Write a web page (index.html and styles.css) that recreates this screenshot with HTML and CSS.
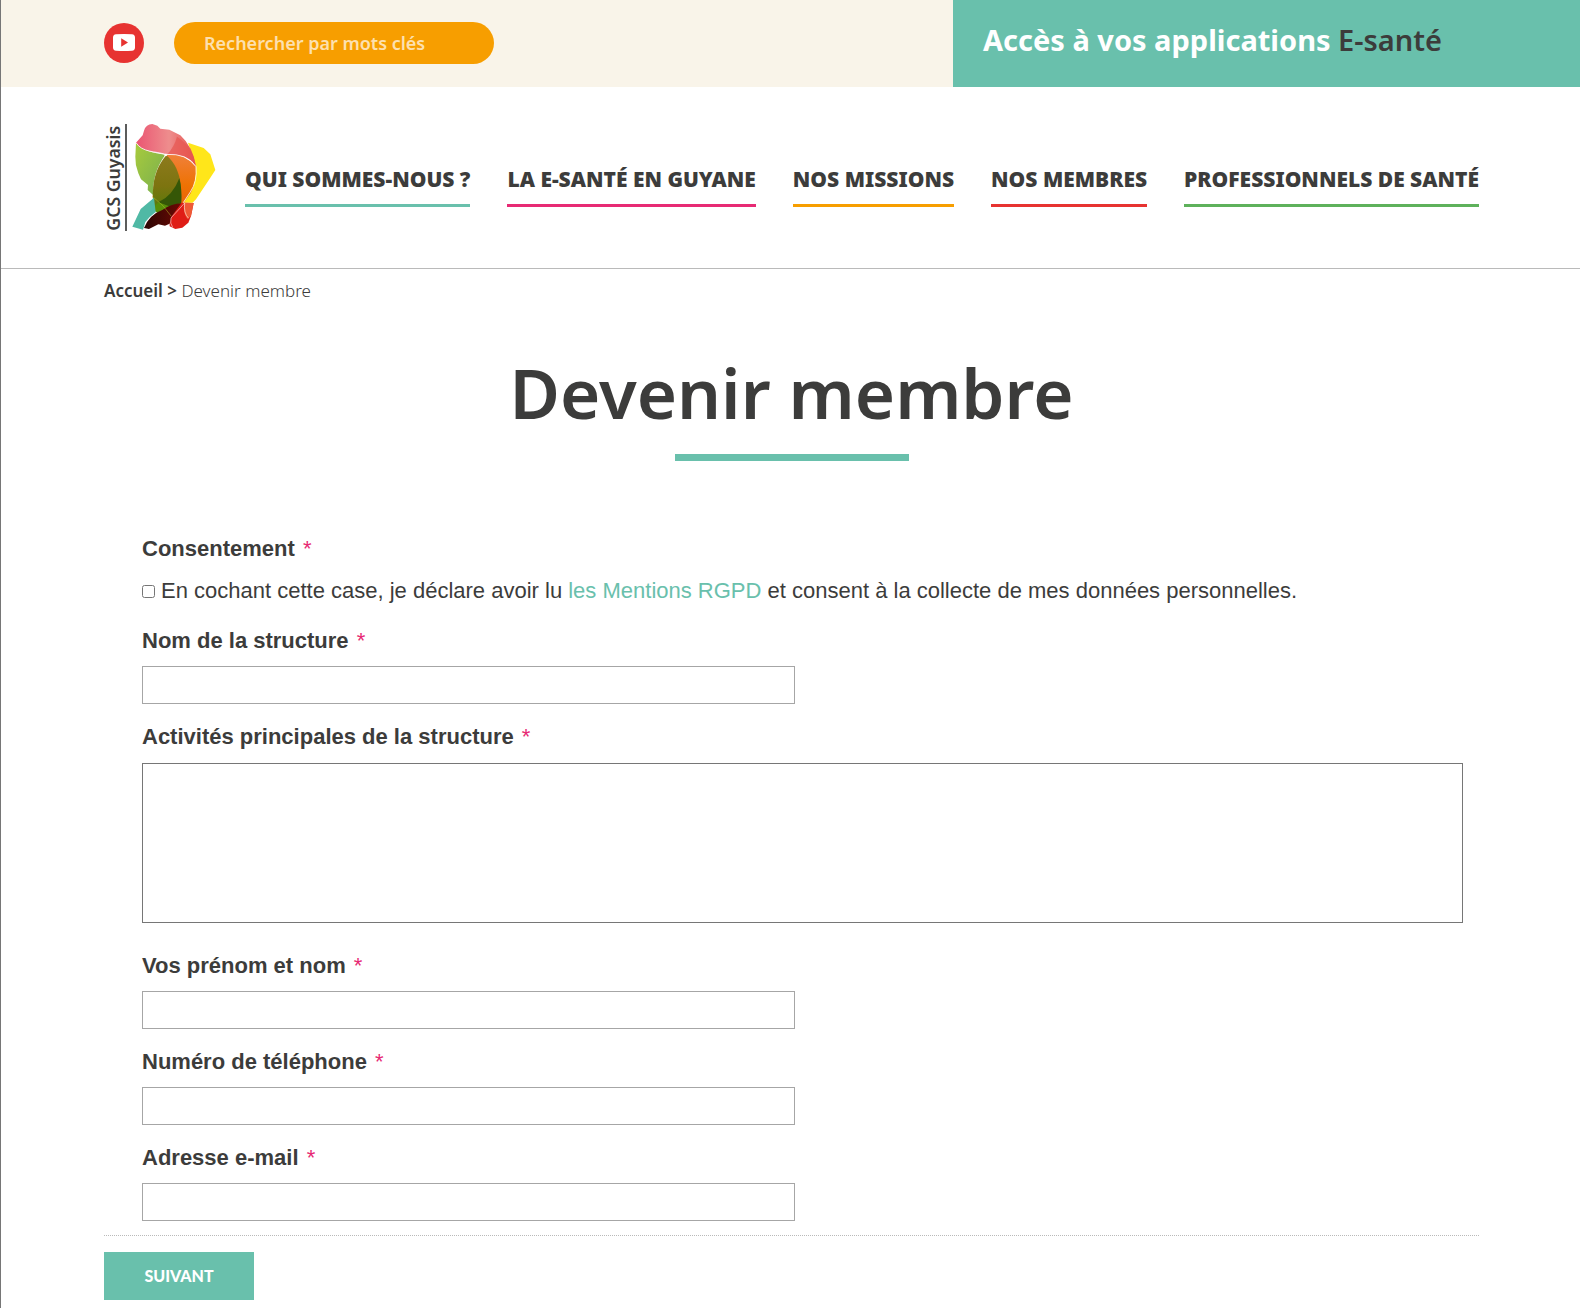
FILE: index.html
```html
<!DOCTYPE html>
<html lang="fr">
<head>
<meta charset="utf-8">
<meta name="viewport" content="width=device-width, initial-scale=1">
<title>Devenir membre - GCS Guyasis</title>
<link rel="stylesheet" href="styles.css">
</head>
<body>
<div class="topbar">
  <div class="topbar-tools">
    <a class="youtube" href="#" aria-label="YouTube">
      <svg viewBox="0 0 40 40" width="40" height="40" aria-hidden="true">
        <circle cx="20" cy="20" r="20" fill="#e73331"/>
        <path d="M12 11.300q8-.8 16 0 3 .2 3 3.200v10q0 3-3 3.200-8 .8-16 0-3-.2-3-3.200v-10q0-3 3-3.200z" fill="#fff"/>
        <path d="M17.200 15.300l6.800 4.200-6.800 4.200z" fill="#e73331"/>
      </svg>
    </a>
    <form class="search" role="search">
      <input class="search-input" type="search" placeholder="Rechercher par mots clés" aria-label="Rechercher par mots clés">
    </form>
  </div>
  <a class="apps" href="#">Accès à vos applications <span class="apps-dark">E-santé</span></a>
</div>

<header class="header">
  <a class="logo" href="#" aria-label="GCS Guyasis">
    <svg class="logo-art" viewBox="42 30 336 336" width="112" height="112" aria-hidden="true">
      <defs>
        <linearGradient id="pink" x1="0" x2="1"><stop offset="0" stop-color="#ea5572"/><stop offset=".55" stop-color="#ee8d8d"/><stop offset="1" stop-color="#e6504a"/></linearGradient>
        <linearGradient id="green" x1="0" y1="0" x2="1" y2="1"><stop offset="0" stop-color="#a9cb3c"/><stop offset="1" stop-color="#76ae50"/></linearGradient>
        <linearGradient id="orange" x1="0" y1="0" x2="0" y2="1"><stop offset="0" stop-color="#f0803a"/><stop offset=".5" stop-color="#ee7203"/><stop offset="1" stop-color="#e8590c"/></linearGradient>
        <linearGradient id="olive" x1="0" y1="0" x2="0" y2="1"><stop offset="0" stop-color="#8d7a1c"/><stop offset=".5" stop-color="#7d7410"/><stop offset="1" stop-color="#4c7c08"/></linearGradient>
        <linearGradient id="dark" x1="0" x2="1"><stop offset="0" stop-color="#2a0503"/><stop offset="1" stop-color="#6d0a04"/></linearGradient>
      </defs>
      <text class="logo-text" transform="translate(91 362) rotate(-90)">GCS Guyasis</text>
      <path d="M108 42V363" stroke="#3c3c3b" stroke-width="5"/>
      <path d="M294 98L341 114 361 133 376 180 362 202 318 268 308 278 280 278 318 170Z" fill="#ffe61a"/>
      <path d="M138 98C155 122 190 128 226 134C200 170 187 210 190 256L173 240 174 225 153 208 145 190Q135 165 136 140Z" fill="url(#green)"/>
      <path d="M187 256Q204 275 217 286L200 302Q191 282 187 256Z" fill="#f39a17"/>
      <path d="M226 134Q280 125 318 170Q320 215 302 250Q278 285 245 320Q220 250 226 134Z" fill="url(#orange)"/>
      <path d="M229 136C262 165 277 205 273 278L245 320Q210 320 192 299C183 238 190 180 229 136Z" fill="url(#olive)"/>
      <path d="M268 205Q276 235 274 278L238 292 205 277Q248 258 268 205Z" fill="#355707"/>
      <path d="M205 277L238 289Q213 304 197 307L192 290Z" fill="#588e08"/>
      <path d="M138 98L158 76 162 62Q168 42 187 42L202 47 211 56 238 59 271 76Q309 110 318 170Q300 142 267 136L226 133C195 123 157 128 138 98Z" fill="url(#pink)"/>
      <path d="M261 80Q309 110 318 170Q300 142 267 136L232 132Q252 112 261 80Z" fill="#e75550" fill-opacity=".7"/>
      <path d="M138 98C157 128 195 123 226 133Q295 130 318 170Q322 215 301 246Q277 287 243 324" fill="none" stroke="#fff" stroke-opacity=".8" stroke-width="3"/>
      <circle cx="227" cy="135" r="4" fill="#fff"/>
      <path d="M152 297L192 263 197 306Q178 320 166 336L159 359 127 350Z" fill="#50b9a5"/>
      <path d="M274 278L311 279 303 318 295 338 277 353 256 357 239 349 238 320Z" fill="#df1d16"/>
      <path d="M283 278L311 279 303 318 292 327Q277 305 283 278Z" fill="#ef5b36"/>
      <path d="M274 280Q246 280 217 300Q178 314 162 354L177 357 205 343 225 347 239 341 244 320Z" fill="url(#dark)"/>
      <path d="M284 279L243 324Q239 340 248 352M284 279Q280 309 296 325" fill="none" stroke="#fff" stroke-opacity=".8" stroke-width="2"/>
      <path d="M190 262Q222 285 243 318" fill="none" stroke="#b7c22c" stroke-opacity=".7" stroke-width="2"/>
    </svg>
  </a>
  <nav class="nav" aria-label="Menu principal">
    <a class="nav-link nav-teal" href="#">QUI SOMMES-NOUS ?</a>
    <a class="nav-link nav-pink" href="#">LA E-SANTÉ EN GUYANE</a>
    <a class="nav-link nav-orange" href="#">NOS MISSIONS</a>
    <a class="nav-link nav-red" href="#">NOS MEMBRES</a>
    <a class="nav-link nav-green" href="#">PROFESSIONNELS DE SANTÉ</a>
  </nav>
</header>

<main class="main">
  <div class="breadcrumb"><a class="breadcrumb-home" href="#">Accueil &gt;</a> Devenir membre</div>
  <h1 class="title">Devenir membre</h1>
  <form class="form">
    <div class="fields">
      <fieldset class="consent">
        <legend class="label">Consentement <span class="required">*</span></legend>
        <div class="consent-row">
          <input class="consent-box" type="checkbox" id="consent">
          <label for="consent">En cochant cette case, je déclare avoir lu <a class="link" href="#">les Mentions RGPD</a> et consent à la collecte de mes données personnelles.</label>
        </div>
      </fieldset>
      <div class="field">
        <label class="label" for="structure">Nom de la structure <span class="required">*</span></label>
        <input class="input" type="text" id="structure">
      </div>
      <div class="field field-area">
        <label class="label" for="activities">Activités principales de la structure <span class="required">*</span></label>
        <textarea class="input textarea" id="activities"></textarea>
      </div>
      <div class="field">
        <label class="label" for="fullname">Vos prénom et nom <span class="required">*</span></label>
        <input class="input" type="text" id="fullname">
      </div>
      <div class="field">
        <label class="label" for="phone">Numéro de téléphone <span class="required">*</span></label>
        <input class="input" type="tel" id="phone">
      </div>
      <div class="field">
        <label class="label" for="email">Adresse e-mail <span class="required">*</span></label>
        <input class="input" type="email" id="email">
      </div>
    </div>
    <div class="actions">
      <button class="next" type="button">SUIVANT</button>
    </div>
  </form>
</main>
</body>
</html>
```
FILE: styles.css
```css
:root {
  --ink: #3c3c3b;
  --teal: #69c0ac;
  --pink: #e72a74;
  --display: "Noto Sans", "Open Sans", sans-serif;
  --left: 103px;
  --right: 101px;
}

* {
  box-sizing: border-box;
}

body {
  margin: 0;
  border-left: 1px solid #767676;
  background: #fff;
  color: var(--ink);
  font: 22px/26px "Liberation Sans", Arial, sans-serif;
}

a {
  color: inherit;
  text-decoration: none;
}

/* Top bar */
.topbar {
  display: flex;
  min-height: 87px;
  background: #f9f4e9;
}

.topbar-tools {
  display: flex;
  flex: 1;
  align-items: flex-start;
  gap: 30px;
  padding: 22px 0 0 var(--left);
}

.youtube {
  display: flex;
  padding-top: 1px;
}

.search-input {
  display: block;
  width: 320px;
  height: 42px;
  padding: 0 30px;
  border: 0;
  border-radius: 21px;
  background: #f79e00;
  color: #fff;
  font: 600 18px/24px var(--display);
}

.search-input::placeholder {
  color: #fde0af;
  opacity: 1;
}

.apps {
  width: 627px;
  padding: 23px 30px;
  background: var(--teal);
  color: #fff;
  font: 700 29px/34px var(--display);
}

.apps-dark {
  color: var(--ink);
  font-weight: 600;
}

/* Header */
.header {
  display: flex;
  align-items: flex-start;
  gap: 29px;
  padding: 33px var(--right) 36px var(--left);
  border-bottom: 1px solid #bababa;
}

.logo {
  display: flex;
}

.logo-art {
  overflow: visible;
}

.logo-text {
  font: 600 53px var(--display);
  fill: var(--ink);
}

.nav {
  display: flex;
  flex: 1;
  justify-content: space-between;
  padding-top: 46px;
}

.nav-link {
  padding-bottom: 11px;
  border-bottom: 3px solid;
  font: 900 21px/27px var(--display);
}

.nav-teal { border-color: var(--teal); }
.nav-pink { border-color: var(--pink); }
.nav-orange { border-color: #f79e00; }
.nav-red { border-color: #e73331; }
.nav-green { border-color: #5eb15b; }

/* Page heading */
.main {
  padding: 10px var(--right) 8px var(--left);
}

.breadcrumb {
  font: 300 17px/24px var(--display);
}

.breadcrumb-home {
  font-weight: 600;
}

.title {
  display: flex;
  flex-direction: column;
  align-items: center;
  margin: 45px 0 74px;
  font: 600 69px/88px var(--display);
}

.title::after {
  width: 234px;
  height: 7px;
  margin-top: 18px;
  background: var(--teal);
  content: "";
}

/* Form */
.fields {
  display: flex;
  flex-direction: column;
  gap: 19px;
  padding: 0 16px 14px 38px;
}

.consent {
  min-width: 0;
  margin: 0 0 4px;
  padding: 0;
  border: 0;
}

.label {
  display: block;
  padding: 0;
  font-weight: 700;
  line-height: 28px;
}

.required {
  margin-left: 2px;
  color: var(--pink);
  font-weight: 400;
}

.consent-row {
  display: flex;
  align-items: center;
  gap: 6px;
  padding-top: 15px;
}

.consent-box {
  width: 13px;
  height: 13px;
  margin: 0;
}

.link {
  color: var(--teal);
}

.field {
  display: flex;
  flex-direction: column;
  gap: 11px;
}

.field-area {
  gap: 12px;
  margin-bottom: 10px;
}

.input {
  width: 50%;
  max-width: 653px;
  height: 38px;
  padding: 0 10px;
  border: 1px solid #a6a6a6;
  background: #fff;
  color: var(--ink);
  font: inherit;
}

.textarea {
  width: 100%;
  max-width: none;
  height: 160px;
  padding: 10px;
  border-color: #767676;
  resize: none;
}

.actions {
  padding-top: 16px;
  border-top: 1px dotted #bababa;
}

.next {
  display: block;
  min-width: 150px;
  height: 48px;
  padding: 0 40px;
  border: 0;
  background: var(--teal);
  color: #fff;
  font: 900 16px/24px Lato, sans-serif;
}
```
